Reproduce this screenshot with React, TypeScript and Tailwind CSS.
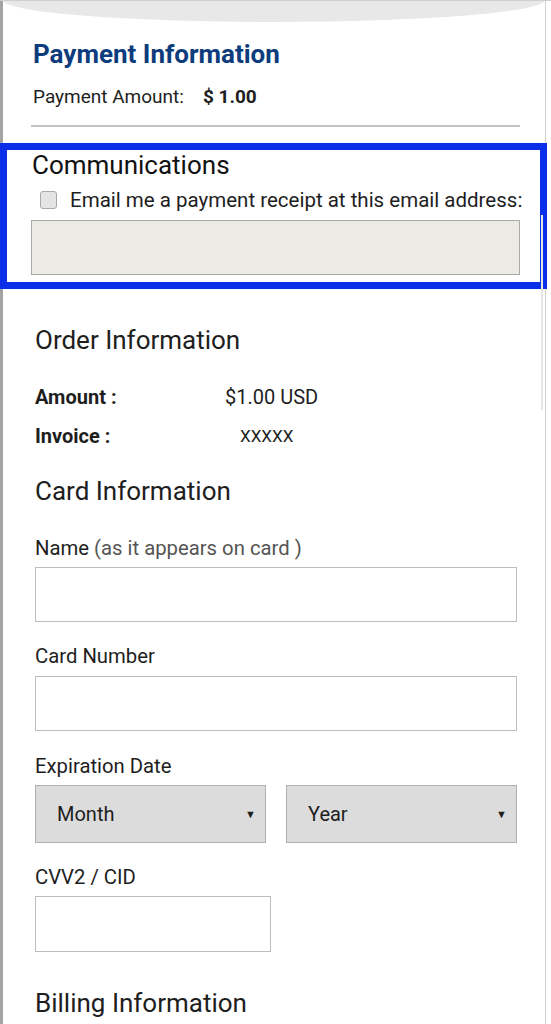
import React from 'react';

const FONT = "font-['Roboto','Noto_Sans',sans-serif]";

function TextInput({ className = '' }: { className?: string }) {
  return (
    <div
      className={`h-[55px] border border-[#bdbdbd] bg-white ${className}`}
    />
  );
}

function SelectBox({ label }: { label: string }) {
  return (
    <div className="flex h-[58px] flex-1 items-center justify-between border border-[#b0b0b0] bg-[#dcdcdc] pl-[21px] pr-[9px]">
      <span className="text-[20px] leading-[24px] text-[#1e1e1e]">{label}</span>
      <span className="text-[11px] leading-none text-[#1e1e1e]">▼</span>
    </div>
  );
}

function FieldLabel({ children }: { children: React.ReactNode }) {
  return <div className="text-[20.3px] leading-[22px] text-[#1e1e1e]">{children}</div>;
}

function SectionTitle({ children }: { children: React.ReactNode }) {
  return <div className="text-[26px] leading-[30px] text-[#1e1e1e]">{children}</div>;
}

export default function App() {
  return (
    <div className={`relative h-[1024px] w-[551px] overflow-hidden bg-white ${FONT}`}>
      <div className="h-full w-[546px] border-l-[3px] border-r border-l-[#a4a4a4] border-r-[#d2d2d2]">
        {/* Payment summary */}
        <div className="pl-[28px] pr-[25px] pt-[39px]">
          <div className="ml-[2px] text-[26px] font-bold leading-[30px] text-[#0d3c7c]">
            Payment Information
          </div>
          <div className="ml-[2px] mt-[17px] flex gap-[19px] text-[19px] leading-[22px] text-[#1e1e1e]">
            <span>Payment Amount:</span>
            <span className="font-bold">$ 1.00</span>
          </div>
          <div className="mt-[17px] h-[2px] bg-[#c2c2c2]" />

          {/* Communications */}
          <div className="relative mt-[23px]">
            <div className="ml-[1px] text-[26px] leading-[30px] text-[#111]">Communications</div>
            <div className="mt-[8px] flex items-center gap-[13px] pl-[9px]">
              <span className="h-[18px] w-[17px] shrink-0 rounded-[3px] border border-[#a8a8a8] bg-[#e4e4e4]" />
              <span className="whitespace-nowrap text-[20.5px] leading-[24px] text-[#1e1e1e]">
                Email me a payment receipt at this email address:
              </span>
            </div>
            <div className="mt-[8px] h-[55px] border border-[#a9a9a9] bg-[#ebeae4]" />
            {/* highlight frame */}
            <div className="pointer-events-none absolute -bottom-[14px] -left-[31px] -right-[27px] -top-[7px] border-[7px] border-[#0b2ee8]" />
          </div>
        </div>

        {/* Order + card form */}
        <div className="pl-[32px] pr-[28px]">
          <div className="mt-[50px]">
            <SectionTitle>Order Information</SectionTitle>
          </div>
          <div className="mt-[31px] grid grid-cols-[190px_1fr] gap-y-[17px] text-[20px] leading-[22px] text-[#1e1e1e]">
            <span className="font-bold">Amount :</span>
            <span>$1.00 USD</span>
            <span className="font-bold">Invoice :</span>
            <span className="pl-[15px] text-[17px]">XXXXX</span>
          </div>

          <div className="mt-[29px]">
            <SectionTitle>Card Information</SectionTitle>
          </div>
          <div className="mt-[31px]">
            <FieldLabel>
              Name <span className="text-[#555]">(as it appears on card )</span>
            </FieldLabel>
          </div>
          <TextInput className="mt-[8px]" />

          <div className="mt-[23px]">
            <FieldLabel>Card Number</FieldLabel>
          </div>
          <TextInput className="mt-[9px]" />

          <div className="mt-[24px]">
            <FieldLabel>Expiration Date</FieldLabel>
          </div>
          <div className="mt-[8px] flex gap-[20px]">
            <SelectBox label="Month" />
            <SelectBox label="Year" />
          </div>

          <div className="mt-[23px]">
            <FieldLabel>CVV2 / CID</FieldLabel>
          </div>
          <TextInput className="mt-[8px] h-[56px] w-[236px]" />

          <div className="mt-[36px]">
            <SectionTitle>Billing Information</SectionTitle>
          </div>
        </div>
      </div>

      {/* overscroll glow */}
      <div className="pointer-events-none absolute -top-[22px] left-[3px] right-[6px] h-[44px] rounded-[50%] bg-[#e8e8e8]" />
      <div className="pointer-events-none absolute left-0 right-0 top-0 h-px bg-[#cfcfcf]" />
      {/* scrollbar thumb */}
      <div className="pointer-events-none absolute left-[541px] top-[215px] h-[195px] w-[2px] bg-[#e6e6e6]" />
    </div>
  );
}
